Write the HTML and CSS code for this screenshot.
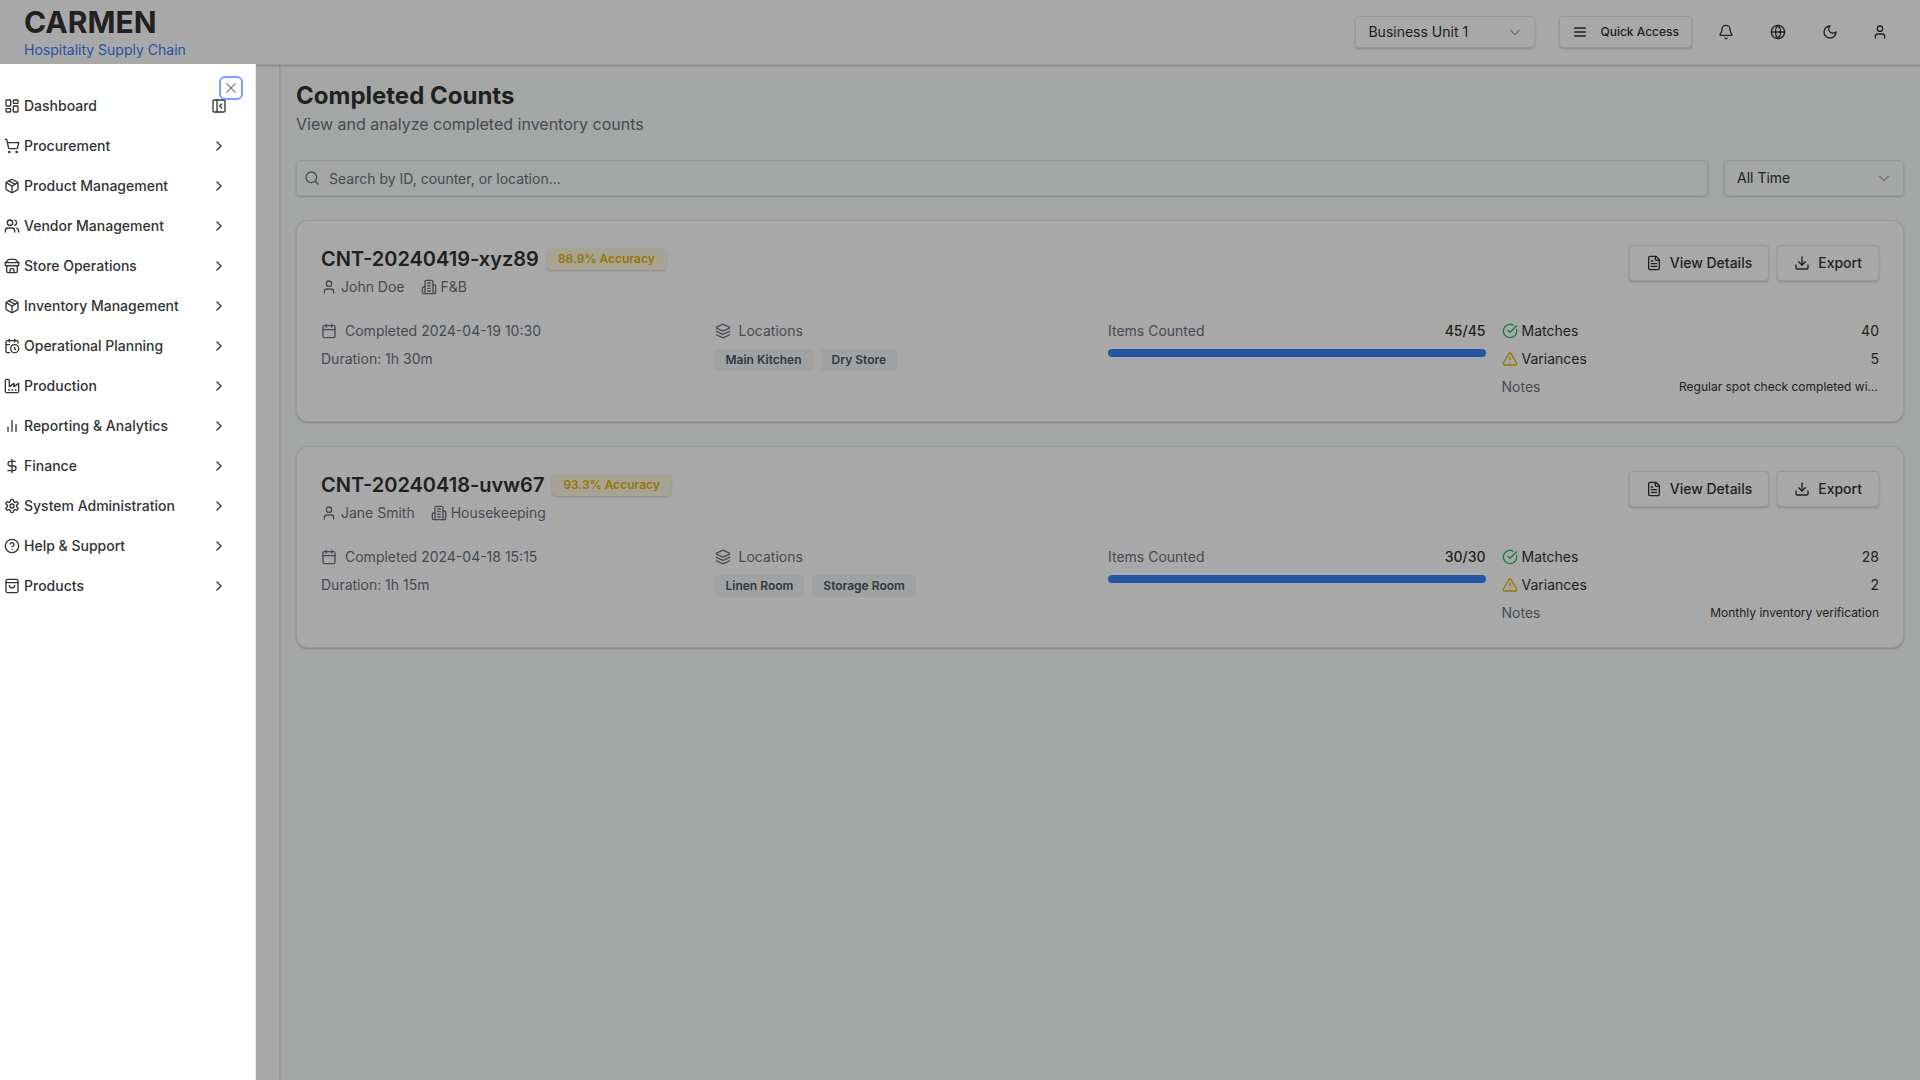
FILE: index.html
```html
<!DOCTYPE html>
<html lang="en">
<head>
<meta charset="utf-8">
<meta name="viewport" content="width=device-width, initial-scale=1">
<title>Completed Counts - CARMEN</title>
<link rel="stylesheet" href="styles.css">
</head>
<body>
<svg class="sprite" aria-hidden="true">
  <symbol id="i-dashboard" viewBox="0 0 24 24"><rect width="7" height="9" x="3" y="3" rx="1"/><rect width="7" height="5" x="14" y="3" rx="1"/><rect width="7" height="9" x="14" y="12" rx="1"/><rect width="7" height="5" x="3" y="16" rx="1"/></symbol>
  <symbol id="i-panel" viewBox="0 0 24 24"><rect width="18" height="18" x="3" y="3" rx="2"/><path d="M9 3v18"/><path d="m16 15-3-3 3-3"/></symbol>
  <symbol id="i-chevron" viewBox="0 0 24 24"><path d="m9 18 6-6-6-6"/></symbol>
  <symbol id="i-cart" viewBox="0 0 24 24"><circle cx="8" cy="21" r="1"/><circle cx="19" cy="21" r="1"/><path d="M2.05 2.05h2l2.66 12.42a2 2 0 0 0 2 1.58h9.78a2 2 0 0 0 1.95-1.57l1.65-7.43H5.12"/></symbol>
  <symbol id="i-package" viewBox="0 0 24 24"><path d="m7.5 4.27 9 5.15"/><path d="M21 8a2 2 0 0 0-1-1.73l-7-4a2 2 0 0 0-2 0l-7 4A2 2 0 0 0 3 8v8a2 2 0 0 0 1 1.73l7 4a2 2 0 0 0 2 0l7-4A2 2 0 0 0 21 16Z"/><path d="m3.3 7 8.7 5 8.7-5"/><path d="M12 22V12"/></symbol>
  <symbol id="i-users" viewBox="0 0 24 24"><path d="M16 21v-2a4 4 0 0 0-4-4H6a4 4 0 0 0-4 4v2"/><circle cx="9" cy="7" r="4"/><path d="M22 21v-2a4 4 0 0 0-3-3.870"/><path d="M16 3.130a4 4 0 0 1 0 7.750"/></symbol>
  <symbol id="i-store" viewBox="0 0 24 24"><path d="m2 7 4.41-4.41A2 2 0 0 1 7.83 2h8.34a2 2 0 0 1 1.42.59L22 7"/><path d="M4 12v8a2 2 0 0 0 2 2h12a2 2 0 0 0 2-2v-8"/><path d="M15 22v-4a2 2 0 0 0-2-2h-2a2 2 0 0 0-2 2v4"/><path d="M2 7h20"/><path d="M22 7v3a2 2 0 0 1-2 2a2.700 2.700 0 0 1-1.590-.630.700.700 0 0 0-.820 0A2.700 2.700 0 0 1 16 12a2.700 2.700 0 0 1-1.590-.630.700.700 0 0 0-.820 0A2.700 2.700 0 0 1 12 12a2.700 2.700 0 0 1-1.590-.630.700.700 0 0 0-.820 0A2.700 2.700 0 0 1 8 12a2.700 2.700 0 0 1-1.590-.630.700.700 0 0 0-.820 0A2.700 2.700 0 0 1 4 12a2 2 0 0 1-2-2V7"/></symbol>
  <symbol id="i-calclock" viewBox="0 0 24 24"><path d="M21 7.500V6a2 2 0 0 0-2-2H5a2 2 0 0 0-2 2v14a2 2 0 0 0 2 2h3.500"/><path d="M16 2v4"/><path d="M8 2v4"/><path d="M3 10h5"/><path d="M17.500 17.500 16 16.300V14"/><circle cx="16" cy="16" r="6"/></symbol>
  <symbol id="i-factory" viewBox="0 0 24 24"><path d="M2 20a2 2 0 0 0 2 2h16a2 2 0 0 0 2-2V8l-7 5V8l-7 5V4a2 2 0 0 0-2-2H4a2 2 0 0 0-2 2Z"/><path d="M17 18h1"/><path d="M12 18h1"/><path d="M7 18h1"/></symbol>
  <symbol id="i-chart" viewBox="0 0 24 24"><path d="M18 20V10"/><path d="M12 20V4"/><path d="M6 20v-6"/></symbol>
  <symbol id="i-dollar" viewBox="0 0 24 24"><path d="M12 2v20"/><path d="M17 5H9.500a3.500 3.500 0 0 0 0 7h5a3.500 3.500 0 0 1 0 7H6"/></symbol>
  <symbol id="i-settings" viewBox="0 0 24 24"><path d="M12.22 2h-.44a2 2 0 0 0-2 2v.18a2 2 0 0 1-1 1.730l-.43.25a2 2 0 0 1-2 0l-.15-.08a2 2 0 0 0-2.730.730l-.22.380a2 2 0 0 0 .730 2.730l.150.100a2 2 0 0 1 1 1.720v.510a2 2 0 0 1-1 1.740l-.150.090a2 2 0 0 0-.730 2.730l.220.380a2 2 0 0 0 2.730.730l.150-.080a2 2 0 0 1 2 0l.430.250a2 2 0 0 1 1 1.730V20a2 2 0 0 0 2 2h.440a2 2 0 0 0 2-2v-.180a2 2 0 0 1 1-1.730l.430-.250a2 2 0 0 1 2 0l.150.080a2 2 0 0 0 2.730-.730l.220-.390a2 2 0 0 0-.730-2.730l-.150-.080a2 2 0 0 1-1-1.740v-.500a2 2 0 0 1 1-1.740l.150-.090a2 2 0 0 0 .730-2.730l-.220-.380a2 2 0 0 0-2.730-.730l-.150.080a2 2 0 0 1-2 0l-.430-.250a2 2 0 0 1-1-1.730V4a2 2 0 0 0-2-2z"/><circle cx="12" cy="12" r="3"/></symbol>
  <symbol id="i-help" viewBox="0 0 24 24"><circle cx="12" cy="12" r="10"/><path d="M9.090 9a3 3 0 0 1 5.830 1c0 2-3 3-3 3"/><path d="M12 17h.01"/></symbol>
  <symbol id="i-bag" viewBox="0 0 24 24"><rect x="3" y="2" width="18" height="20" rx="2.500"/><path d="M3 7h18"/><path d="M16 11a4 4 0 0 1-8 0"/></symbol>
  <symbol id="i-menu" viewBox="0 0 24 24"><path d="M4 6h16"/><path d="M4 12h16"/><path d="M4 18h16"/></symbol>
  <symbol id="i-bell" viewBox="0 0 24 24"><path d="M10.268 21a2 2 0 0 0 3.464 0"/><path d="M3.262 15.326A1 1 0 0 0 4 17h16a1 1 0 0 0 .740-1.673C19.410 13.956 18 12.499 18 8A6 6 0 0 0 6 8c0 4.499-1.411 5.956-2.738 7.326"/></symbol>
  <symbol id="i-globe" viewBox="0 0 24 24"><circle cx="12" cy="12" r="10"/><path d="M12 2a14.500 14.500 0 0 0 0 20 14.500 14.500 0 0 0 0-20"/><path d="M2 12h20"/></symbol>
  <symbol id="i-moon" viewBox="0 0 24 24"><path d="M12 3a6 6 0 0 0 9 9 9 9 0 1 1-9-9Z"/></symbol>
  <symbol id="i-user" viewBox="0 0 24 24"><path d="M19 21v-2a4 4 0 0 0-4-4H9a4 4 0 0 0-4 4v2"/><circle cx="12" cy="7" r="4"/></symbol>
  <symbol id="i-search" viewBox="0 0 24 24"><circle cx="11" cy="11" r="8"/><path d="m21 21-4.300-4.300"/></symbol>
  <symbol id="i-building" viewBox="0 0 24 24"><path d="M6 22V4a2 2 0 0 1 2-2h8a2 2 0 0 1 2 2v18Z"/><path d="M6 12H4a2 2 0 0 0-2 2v6a2 2 0 0 0 2 2h2"/><path d="M18 9h2a2 2 0 0 1 2 2v9a2 2 0 0 1-2 2h-2"/><path d="M10 6h4"/><path d="M10 10h4"/><path d="M10 14h4"/><path d="M10 18h4"/></symbol>
  <symbol id="i-calendar" viewBox="0 0 24 24"><path d="M8 2v4"/><path d="M16 2v4"/><rect width="18" height="18" x="3" y="4" rx="2"/><path d="M3 10h18"/></symbol>
  <symbol id="i-layers" viewBox="0 0 24 24"><path d="m12.830 2.180a2 2 0 0 0-1.660 0L2.600 6.080a1 1 0 0 0 0 1.830l8.580 3.910a2 2 0 0 0 1.660 0l8.580-3.900a1 1 0 0 0 0-1.830Z"/><path d="m22 17.650-9.170 4.160a2 2 0 0 1-1.660 0L2 17.650"/><path d="m22 12.650-9.170 4.160a2 2 0 0 1-1.660 0L2 12.650"/></symbol>
  <symbol id="i-check" viewBox="0 0 24 24"><path d="M21.801 10A10 10 0 1 1 17 3.335"/><path d="m9 11 3 3L22 4"/></symbol>
  <symbol id="i-alert" viewBox="0 0 24 24"><path d="m21.730 18-8-14a2 2 0 0 0-3.480 0l-8 14A2 2 0 0 0 4 21h16a2 2 0 0 0 1.730-3"/><path d="M12 9v4"/><path d="M12 17h.01"/></symbol>
  <symbol id="i-file" viewBox="0 0 24 24"><path d="M15 2H6a2 2 0 0 0-2 2v16a2 2 0 0 0 2 2h12a2 2 0 0 0 2-2V7Z"/><path d="M14 2v4a2 2 0 0 0 2 2h4"/><path d="M10 9H8"/><path d="M16 13H8"/><path d="M16 17H8"/></symbol>
  <symbol id="i-download" viewBox="0 0 24 24"><path d="M21 15v4a2 2 0 0 1-2 2H5a2 2 0 0 1-2-2v-4"/><path d="m7 10 5 5 5-5"/><path d="M12 15V3"/></symbol>
  <symbol id="i-close" viewBox="0 0 15 15"><path d="M3.500 3.500l8 8M11.500 3.500l-8 8"/></symbol>
  <symbol id="i-down" viewBox="0 0 15 15"><path d="M3.500 6l4 4 4-4"/></symbol>
</svg>

<header class="topbar">
  <div class="brand">
    <span class="brand-name">CARMEN</span>
    <span class="brand-sub">Hospitality Supply Chain</span>
  </div>
  <div class="topbar-actions">
    <div class="select select-compact">
      <select aria-label="Business unit"><option>Business Unit 1</option><option>Business Unit 2</option></select>
      <svg class="icon select-arrow"><use href="#i-down"/></svg>
    </div>
    <button class="btn btn-quick" type="button"><svg class="icon"><use href="#i-menu"/></svg>Quick Access</button>
    <button class="icon-btn" type="button" aria-label="Notifications"><svg class="icon"><use href="#i-bell"/></svg></button>
    <button class="icon-btn" type="button" aria-label="Language"><svg class="icon"><use href="#i-globe"/></svg></button>
    <button class="icon-btn" type="button" aria-label="Theme"><svg class="icon"><use href="#i-moon"/></svg></button>
    <button class="icon-btn icon-btn-narrow" type="button" aria-label="Account"><svg class="icon"><use href="#i-user"/></svg></button>
  </div>
</header>

<div class="layout">
  <div class="rail"></div>
  <main class="content">
    <h1 class="page-title">Completed Counts</h1>
    <p class="page-lead">View and analyze completed inventory counts</p>

    <div class="filters">
      <div class="search">
        <svg class="icon search-icon"><use href="#i-search"/></svg>
        <input type="search" aria-label="Search counts" placeholder="Search by ID, counter, or location...">
      </div>
      <div class="select">
        <select aria-label="Period"><option>All Time</option><option>This Week</option></select>
        <svg class="icon select-arrow"><use href="#i-down"/></svg>
      </div>
    </div>

    <div class="cards">
      <article class="card">
        <div class="card-head">
          <div>
            <div class="card-title-row"><h2 class="card-title">CNT-20240419-xyz89</h2><span class="badge badge-accuracy">88.9% Accuracy</span></div>
            <div class="meta">
              <span class="meta-item"><svg class="icon"><use href="#i-user"/></svg>John Doe</span>
              <span class="meta-item"><svg class="icon"><use href="#i-building"/></svg>F&amp;B</span>
            </div>
          </div>
          <div class="card-actions">
            <button class="btn" type="button"><svg class="icon"><use href="#i-file"/></svg>View Details</button>
            <button class="btn" type="button"><svg class="icon"><use href="#i-download"/></svg>Export</button>
          </div>
        </div>
        <div class="stats">
          <div class="stat">
            <div class="label"><svg class="icon"><use href="#i-calendar"/></svg>Completed 2024-04-19 10:30</div>
            <div class="label">Duration: 1h 30m</div>
          </div>
          <div class="stat">
            <div class="label"><svg class="icon"><use href="#i-layers"/></svg>Locations</div>
            <div class="tags"><span class="badge">Main Kitchen</span><span class="badge">Dry Store</span></div>
          </div>
          <div class="stat">
            <div class="pair"><span class="label">Items Counted</span><span class="value">45/45</span></div>
            <div class="progress"><div class="progress-fill" style="width:100%"></div></div>
          </div>
          <div class="stat">
            <div class="pair"><span class="result"><svg class="icon icon-ok"><use href="#i-check"/></svg>Matches</span><span>40</span></div>
            <div class="pair"><span class="result"><svg class="icon icon-warn"><use href="#i-alert"/></svg>Variances</span><span>5</span></div>
            <div class="pair"><span class="label">Notes</span><span class="note">Regular spot check completed with minor variances</span></div>
          </div>
        </div>
      </article>

      <article class="card">
        <div class="card-head">
          <div>
            <div class="card-title-row"><h2 class="card-title">CNT-20240418-uvw67</h2><span class="badge badge-accuracy">93.3% Accuracy</span></div>
            <div class="meta">
              <span class="meta-item"><svg class="icon"><use href="#i-user"/></svg>Jane Smith</span>
              <span class="meta-item"><svg class="icon"><use href="#i-building"/></svg>Housekeeping</span>
            </div>
          </div>
          <div class="card-actions">
            <button class="btn" type="button"><svg class="icon"><use href="#i-file"/></svg>View Details</button>
            <button class="btn" type="button"><svg class="icon"><use href="#i-download"/></svg>Export</button>
          </div>
        </div>
        <div class="stats">
          <div class="stat">
            <div class="label"><svg class="icon"><use href="#i-calendar"/></svg>Completed 2024-04-18 15:15</div>
            <div class="label">Duration: 1h 15m</div>
          </div>
          <div class="stat">
            <div class="label"><svg class="icon"><use href="#i-layers"/></svg>Locations</div>
            <div class="tags"><span class="badge">Linen Room</span><span class="badge">Storage Room</span></div>
          </div>
          <div class="stat">
            <div class="pair"><span class="label">Items Counted</span><span class="value">30/30</span></div>
            <div class="progress"><div class="progress-fill" style="width:100%"></div></div>
          </div>
          <div class="stat">
            <div class="pair"><span class="result"><svg class="icon icon-ok"><use href="#i-check"/></svg>Matches</span><span>28</span></div>
            <div class="pair"><span class="result"><svg class="icon icon-warn"><use href="#i-alert"/></svg>Variances</span><span>2</span></div>
            <div class="pair"><span class="label">Notes</span><span class="note">Monthly inventory verification</span></div>
          </div>
        </div>
      </article>
    </div>
  </main>
</div>

<div class="overlay"></div>
<aside class="drawer">
  <button class="drawer-close" type="button" aria-label="Close"><svg class="icon"><use href="#i-close"/></svg></button>
  <nav class="nav" aria-label="Main">
    <a class="nav-item" href="#"><svg class="icon"><use href="#i-dashboard"/></svg><span>Dashboard</span><svg class="icon"><use href="#i-panel"/></svg></a>
    <a class="nav-item" href="#"><svg class="icon"><use href="#i-cart"/></svg><span>Procurement</span><svg class="icon"><use href="#i-chevron"/></svg></a>
    <a class="nav-item" href="#"><svg class="icon"><use href="#i-package"/></svg><span>Product Management</span><svg class="icon"><use href="#i-chevron"/></svg></a>
    <a class="nav-item" href="#"><svg class="icon"><use href="#i-users"/></svg><span>Vendor Management</span><svg class="icon"><use href="#i-chevron"/></svg></a>
    <a class="nav-item" href="#"><svg class="icon"><use href="#i-store"/></svg><span>Store Operations</span><svg class="icon"><use href="#i-chevron"/></svg></a>
    <a class="nav-item" href="#"><svg class="icon"><use href="#i-package"/></svg><span>Inventory Management</span><svg class="icon"><use href="#i-chevron"/></svg></a>
    <a class="nav-item" href="#"><svg class="icon"><use href="#i-calclock"/></svg><span>Operational Planning</span><svg class="icon"><use href="#i-chevron"/></svg></a>
    <a class="nav-item" href="#"><svg class="icon"><use href="#i-factory"/></svg><span>Production</span><svg class="icon"><use href="#i-chevron"/></svg></a>
    <a class="nav-item" href="#"><svg class="icon"><use href="#i-chart"/></svg><span>Reporting &amp; Analytics</span><svg class="icon"><use href="#i-chevron"/></svg></a>
    <a class="nav-item" href="#"><svg class="icon"><use href="#i-dollar"/></svg><span>Finance</span><svg class="icon"><use href="#i-chevron"/></svg></a>
    <a class="nav-item" href="#"><svg class="icon"><use href="#i-settings"/></svg><span>System Administration</span><svg class="icon"><use href="#i-chevron"/></svg></a>
    <a class="nav-item" href="#"><svg class="icon"><use href="#i-help"/></svg><span>Help &amp; Support</span><svg class="icon"><use href="#i-chevron"/></svg></a>
    <a class="nav-item" href="#"><svg class="icon"><use href="#i-bag"/></svg><span>Products</span><svg class="icon"><use href="#i-chevron"/></svg></a>
  </nav>
</aside>
</body>
</html>
```
FILE: styles.css
```css
:root {
  --border: #e5e7eb;
  --text: #333333;
  --muted: #6b7280;
  --primary: #3b82f6;
  --page: #f9fbfa;
  --shadow-sm: 0 1px 3px rgba(0, 0, 0, 0.1), 0 1px 2px rgba(0, 0, 0, 0.1);
}

* { box-sizing: border-box; }

body {
  margin: 0;
  min-height: 100vh;
  display: flex;
  flex-direction: column;
  background: var(--page);
  color: var(--text);
  font-family: Inter, "Liberation Sans", sans-serif;
  font-size: 14px;
  line-height: 20px;
}

h1, h2, p { margin: 0; }
button, input, select { font: inherit; color: inherit; }
button { cursor: pointer; }

.sprite { display: none; }

.icon {
  width: 16px;
  height: 16px;
  flex: none;
  fill: none;
  stroke: currentColor;
  stroke-width: 2;
  stroke-linecap: round;
  stroke-linejoin: round;
}

/* Top bar */
.topbar {
  position: relative;
  display: flex;
  align-items: center;
  justify-content: space-between;
  padding: 4px 24px;
  background: #fff;
  border-bottom: 1px solid var(--border);
  box-shadow: var(--shadow-sm);
}

.brand { display: flex; flex-direction: column; }
.brand-name { font-size: 30px; line-height: 36px; font-weight: 700; }
.brand-sub { color: var(--primary); }

.topbar-actions { display: flex; align-items: center; gap: 16px; }
.topbar-actions .select { margin-right: 8px; }

.icon-btn {
  display: flex;
  align-items: center;
  justify-content: center;
  width: 36px;
  height: 36px;
  padding: 0;
  border: 0;
  background: none;
}
.icon-btn-narrow { width: 32px; }

/* Controls */
.btn {
  display: inline-flex;
  align-items: center;
  gap: 8px;
  height: 36px;
  padding: 0 16px;
  border: 1px solid var(--border);
  border-radius: 4px;
  background: #fff;
  box-shadow: var(--shadow-sm);
  font-weight: 500;
  white-space: nowrap;
}
.btn-quick { height: 32px; padding: 0 12px; gap: 12px; font-size: 12px; }

.select { position: relative; width: 180px; flex: none; }
.select select {
  appearance: none;
  display: block;
  width: 100%;
  height: 36px;
  padding: 0 32px 0 12px;
  border: 1px solid var(--border);
  border-radius: 4px;
  background: transparent;
  box-shadow: var(--shadow-sm);
}
.select-compact select { height: 32px; }
.select-arrow {
  position: absolute;
  right: 12px;
  top: 50%;
  margin-top: -8px;
  stroke-width: 1;
  opacity: 0.5;
  pointer-events: none;
}

/* Page */
.layout { flex: 1; display: flex; }
.rail {
  flex: none;
  width: 280px;
  background: #fff;
  border-right: 1px solid var(--border);
  box-shadow: var(--shadow-sm);
}
.content { flex: 1; min-width: 0; padding: 15px 16px 16px; }

.page-title { font-size: 24px; line-height: 32px; font-weight: 700; }
.page-lead { font-size: 16px; line-height: 24px; color: var(--muted); }

.filters { display: flex; gap: 16px; margin: 24px 0; }
.search { position: relative; flex: 1; }
.search-icon { position: absolute; left: 8px; top: 10px; color: var(--muted); }
.search input {
  display: block;
  width: 100%;
  height: 36px;
  padding: 0 12px 0 32px;
  border: 1px solid var(--border);
  border-radius: 4px;
  background: transparent;
  box-shadow: var(--shadow-sm);
}
.search input::placeholder { color: var(--muted); opacity: 1; }

/* Count cards */
.cards { display: flex; flex-direction: column; gap: 24px; }
.card {
  padding: 24px;
  border: 1px solid var(--border);
  border-radius: 12px;
  background: #fff;
  box-shadow: var(--shadow-sm);
}
.card-head { display: flex; justify-content: space-between; align-items: flex-start; }
.card-title-row { display: flex; align-items: center; gap: 8px; }
.card-title { font-size: 20px; line-height: 28px; font-weight: 600; }
.card-actions { display: flex; gap: 8px; }

.badge {
  padding: 3px 11px;
  border-radius: 4px;
  background: #f3f4f6;
  color: #4b5563;
  font-size: 12px;
  line-height: 16px;
  font-weight: 600;
}
.badge-accuracy {
  background: #fdf7e0;
  color: #eab308;
  box-shadow: var(--shadow-sm);
}

.meta { display: flex; gap: 16px; margin-top: 4px; color: var(--muted); }
.meta-item { display: flex; align-items: center; gap: 4px; }

.stats {
  display: grid;
  grid-template-columns: repeat(4, minmax(0, 1fr));
  gap: 16px;
  margin-top: 24px;
}
.stat { display: flex; flex-direction: column; gap: 8px; }
.label { display: flex; align-items: center; gap: 8px; color: var(--muted); }
.tags { display: flex; flex-wrap: wrap; gap: 8px; }
.pair { display: flex; align-items: center; justify-content: space-between; }
.value { font-weight: 500; }
.result { display: flex; align-items: center; gap: 4px; }
.icon-ok { color: #22c55e; }
.icon-warn { color: #eab308; }
.note {
  max-width: 200px;
  overflow: hidden;
  text-overflow: ellipsis;
  white-space: nowrap;
  font-size: 12px;
}

.progress { height: 8px; border-radius: 4px; overflow: hidden; background: #dbeafe; }
.progress-fill { height: 100%; background: var(--primary); }

/* Navigation drawer over the page */
.overlay { position: fixed; inset: 0; background: rgba(0, 0, 0, 0.34); }
.drawer {
  position: fixed;
  top: 64px;
  bottom: 0;
  left: 0;
  width: 256px;
  padding-top: 22px;
  background: #fff;
  border-right: 1px solid var(--border);
}
.drawer-close {
  position: absolute;
  top: 16px;
  right: 16px;
  display: flex;
  padding: 0;
  border: 0;
  border-radius: 2px;
  background: none;
  opacity: 0.7;
  outline: 2px solid var(--primary);
  outline-offset: 2px;
}
.drawer-close .icon { stroke-width: 1; }

.nav { display: flex; flex-direction: column; }
.nav-item {
  display: flex;
  align-items: center;
  gap: 4px;
  height: 40px;
  padding: 0 28px 0 4px;
  color: inherit;
  font-weight: 500;
  text-decoration: none;
}
.nav-item span { flex: 1; }
```
